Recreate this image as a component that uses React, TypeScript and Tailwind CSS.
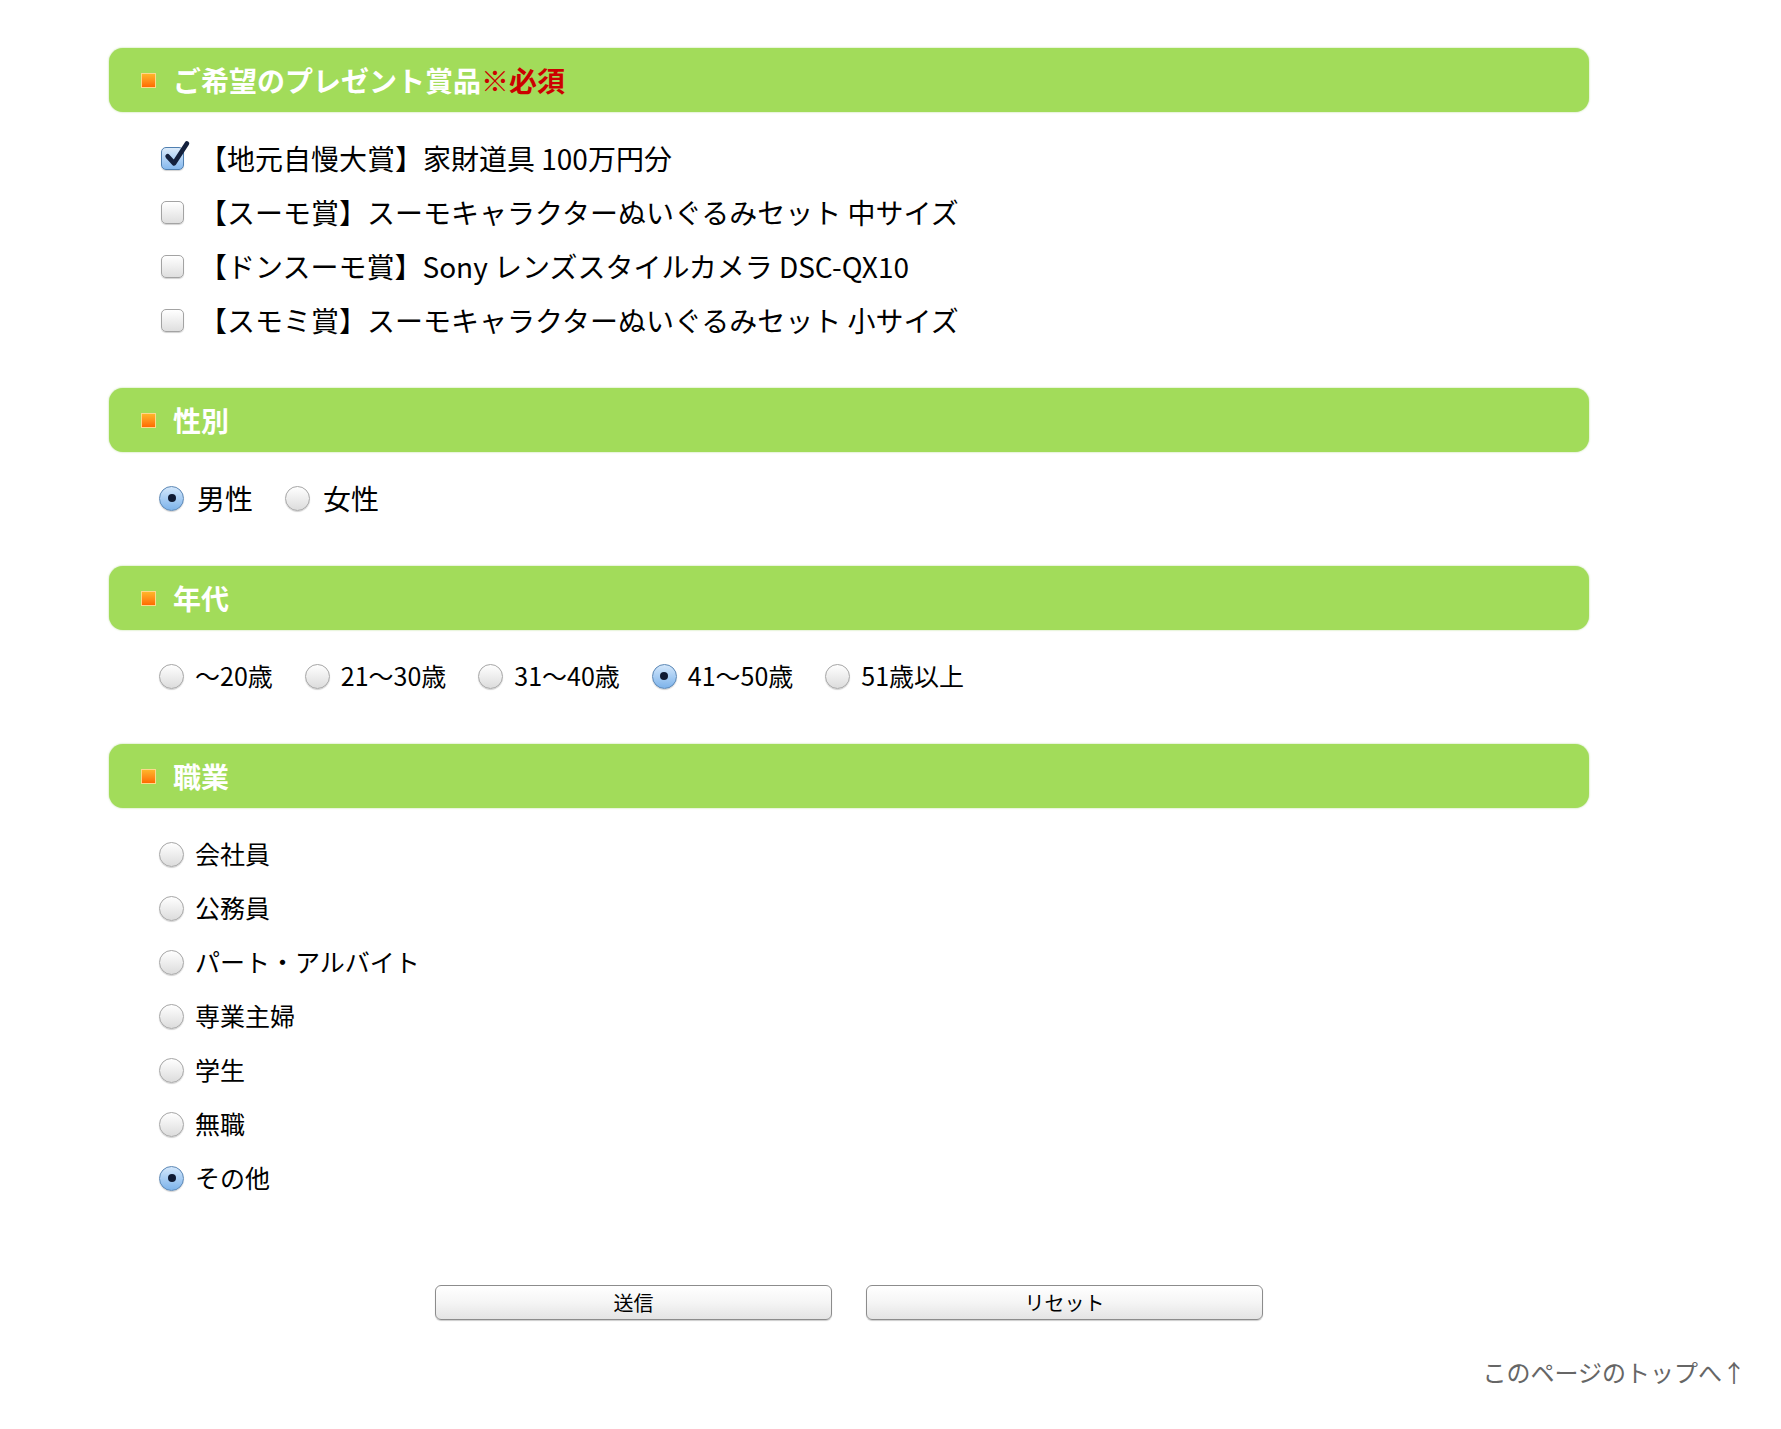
import { useState } from "react";
import clsx from "clsx";

const prizes = [
  "【地元自慢大賞】家財道具 100万円分",
  "【スーモ賞】スーモキャラクターぬいぐるみセット 中サイズ",
  "【ドンスーモ賞】Sony レンズスタイルカメラ DSC-QX10",
  "【スモミ賞】スーモキャラクターぬいぐるみセット 小サイズ",
];
const genders = ["男性", "女性"];
const ages = ["〜20歳", "21〜30歳", "31〜40歳", "41〜50歳", "51歳以上"];
const jobs = ["会社員", "公務員", "パート・アルバイト", "専業主婦", "学生", "無職", "その他"];

function CheckBox({ checked }: { checked: boolean }) {
  return (
    <span
      className={clsx(
        "relative inline-block h-[23px] w-[23px] shrink-0 rounded-[5px] border shadow-[0_1px_1px_rgba(0,0,0,0.18)]",
        checked
          ? "border-[#4f7fb0] bg-linear-to-b from-[#dcebfa] to-[#86b9ee]"
          : "border-[#a3a3a3] bg-linear-to-b from-white to-[#dfdfdf]"
      )}
    >
      {checked ? (
        <svg className="absolute -top-[8px] left-[1px] h-[28px] w-[28px]" viewBox="0 0 24 24">
          <path
            d="M4 14 L9.5 20 L20.5 3"
            stroke="#14213d"
            strokeWidth="4"
            fill="none"
            strokeLinecap="round"
            strokeLinejoin="round"
          />
        </svg>
      ) : null}
    </span>
  );
}

function Radio({ checked }: { checked: boolean }) {
  return (
    <span
      className={clsx(
        "flex h-[25px] w-[25px] shrink-0 items-center justify-center rounded-full border shadow-[0_1px_1px_rgba(0,0,0,0.18)]",
        checked
          ? "border-[#5b87b5] bg-linear-to-b from-[#d3e7fb] to-[#7db3ea]"
          : "border-[#a6a6a6] bg-linear-to-b from-white to-[#dcdcdc]"
      )}
    >
      {checked ? <span className="h-[8px] w-[8px] rounded-full bg-[#0f1a33]" /> : null}
    </span>
  );
}

function SectionBar({ children }: { children: React.ReactNode }) {
  return (
    <div className="flex h-16 items-center rounded-[14px] bg-[#a2dc5a] pl-8 shadow-[0_0_2px_rgba(140,200,80,0.7)]">
      <span className="h-[15px] w-[15px] shrink-0 border border-[#ffd88a] bg-linear-to-b from-[#ffb52a] to-[#ff6a00]" />
      <h2 className="ml-[17px] text-[28px] font-bold leading-none text-white">{children}</h2>
    </div>
  );
}

export default function App() {
  const [picked, setPicked] = useState<boolean[]>([true, false, false, false]);
  const [gender, setGender] = useState(0);
  const [age, setAge] = useState(3);
  const [job, setJob] = useState(6);

  return (
    <div className="min-h-screen bg-white font-['Noto_Sans_CJK_JP','Noto_Sans',sans-serif] text-black">
      <form className="ml-[109px] w-[1480px] pt-12">
        <SectionBar>
          ご希望のプレゼント賞品<span className="text-[#cc0000]">※必須</span>
        </SectionBar>
        <ul className="pb-[41px] pl-[52px] pt-[19px]">
          {prizes.map((p, i) => (
            <li
              key={p}
              className="flex h-[54px] cursor-pointer items-center gap-[15px] text-[28px]"
              onClick={() => setPicked(picked.map((v, j) => (j === i ? !v : v)))}
            >
              <CheckBox checked={picked[i]} />
              <span>{p}</span>
            </li>
          ))}
        </ul>

        <SectionBar>性別</SectionBar>
        <div className="mb-[41px] mt-[19px] flex h-[54px] items-center pl-[50px] text-[28px]">
          {genders.map((g, i) => (
            <label key={g} className="mr-[32px] flex cursor-pointer items-center gap-[13px]" onClick={() => setGender(i)}>
              <Radio checked={gender === i} />
              <span>{g}</span>
            </label>
          ))}
        </div>

        <SectionBar>年代</SectionBar>
        <div className="mb-[41px] mt-[19px] flex h-[54px] items-center pl-[50px] text-[25px]">
          {ages.map((a, i) => (
            <label key={a} className="mr-[32px] flex cursor-pointer items-center gap-[11px]" onClick={() => setAge(i)}>
              <Radio checked={age === i} />
              <span>{a}</span>
            </label>
          ))}
        </div>

        <SectionBar>職業</SectionBar>
        <ul className="pl-[50px] pt-[19px] text-[25px]">
          {jobs.map((j, i) => (
            <li key={j} className="flex h-[54px] cursor-pointer items-center gap-[11px]" onClick={() => setJob(i)}>
              <Radio checked={job === i} />
              <span>{j}</span>
            </li>
          ))}
        </ul>

        <div className="mt-[80px] flex justify-center gap-[34px]">
          <button
            type="button"
            className="h-[35px] w-[397px] rounded-[6px] border border-[#8c8c8c] bg-linear-to-b from-white via-[#f5f5f5] to-[#e4e4e4] text-[20px] leading-none shadow-[0_1px_1px_rgba(0,0,0,0.2)]"
          >
            送信
          </button>
          <button
            type="reset"
            className="h-[35px] w-[397px] rounded-[6px] border border-[#8c8c8c] bg-linear-to-b from-white via-[#f5f5f5] to-[#e4e4e4] text-[20px] leading-none shadow-[0_1px_1px_rgba(0,0,0,0.2)]"
          >
            リセット
          </button>
        </div>
      </form>
      <div className="mt-[34px] pb-10 pr-[35px] text-right">
        <a href="#" className="text-[24px] text-[#666666]">
          このページのトップへ↑
        </a>
      </div>
    </div>
  );
}
